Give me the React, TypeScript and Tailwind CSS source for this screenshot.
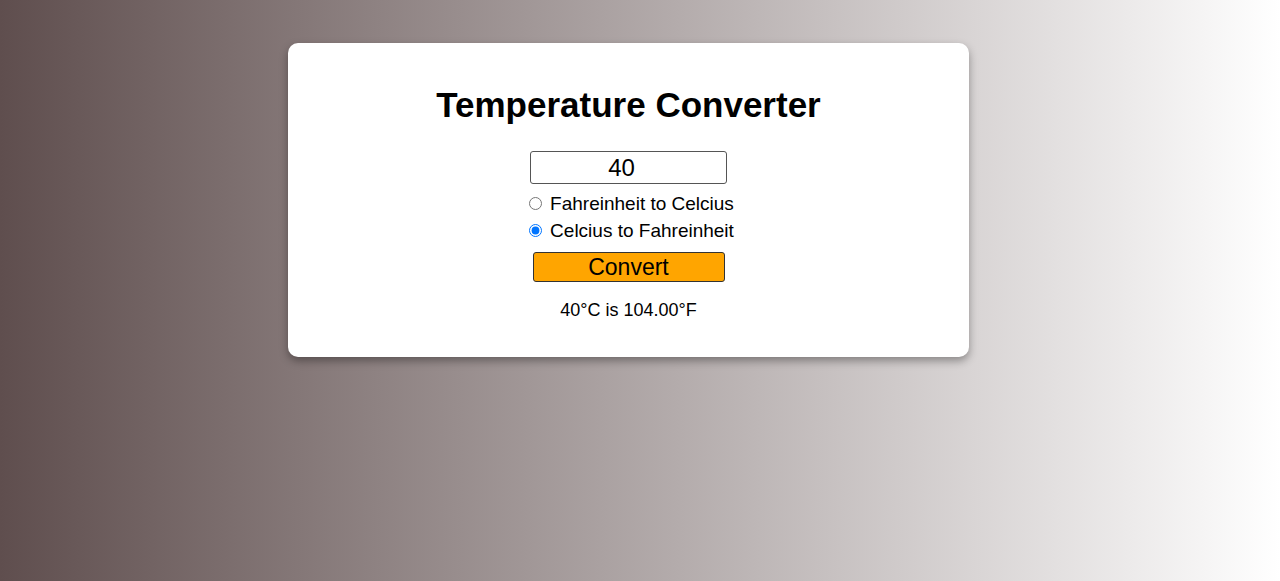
import React, { useState } from 'react';

const App: React.FC = () => {
  const [value, setValue] = useState('40');
  const [mode, setMode] = useState<'f2c' | 'c2f'>('c2f');
  const [result, setResult] = useState('40°C is 104.00°F');

  const convert = () => {
    const n = parseFloat(value);
    if (isNaN(n)) return;
    if (mode === 'c2f') {
      setResult(`${value}°C is ${((n * 9) / 5 + 32).toFixed(2)}°F`);
    } else {
      setResult(`${value}°F is ${(((n - 32) * 5) / 9).toFixed(2)}°C`);
    }
  };

  return (
    <div
      className="min-h-[581px] w-full bg-[linear-gradient(to_right,#5f4e4e,#ffffff)] pt-[43px] text-black"
      style={{ fontFamily: '"Liberation Sans", Arial, sans-serif' }}
    >
      <div className="ml-[288px] flex h-[314px] w-[681px] flex-col items-center rounded-[10px] bg-white pt-[42px] shadow-[0_4px_8px_rgba(0,0,0,0.35)]">
        <h1 className="text-[35px] font-bold leading-[40px]">Temperature Converter</h1>

        <input
          type="text"
          value={value}
          onChange={(e) => setValue(e.target.value)}
          className="mt-[26px] h-[33px] w-[197px] rounded-[3px] border border-[#555] pr-[14px] text-center text-[24px] leading-none outline-none"
        />

        <div className="ml-[6px] mt-[6px] flex flex-col text-[19px] leading-[27px]">
          <label className="flex items-center gap-[8px]">
            <input
              type="radio"
              name="mode"
              checked={mode === 'f2c'}
              onChange={() => setMode('f2c')}
              className="m-0 h-[13px] w-[13px]"
            />
            Fahreinheit to Celcius
          </label>
          <label className="flex items-center gap-[8px]">
            <input
              type="radio"
              name="mode"
              checked={mode === 'c2f'}
              onChange={() => setMode('c2f')}
              className="m-0 h-[13px] w-[13px]"
            />
            Celcius to Fahreinheit
          </label>
        </div>

        <button
          onClick={convert}
          className="mt-[8px] h-[30px] w-[192px] rounded-[3px] border border-[#333] bg-[#ffa500] text-[23px] leading-none"
        >
          Convert
        </button>

        <p className="mt-[18px] text-[18px] leading-[21px]">{result}</p>
      </div>
    </div>
  );
};

export default App;
